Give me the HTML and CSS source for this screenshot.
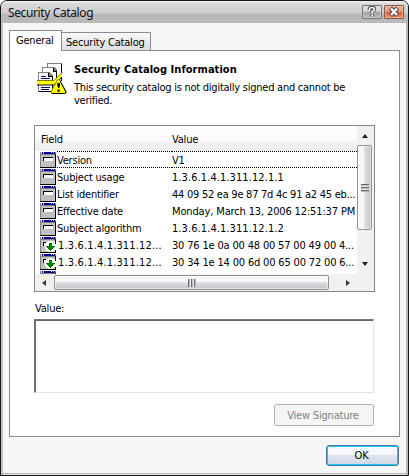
FILE: index.html
```html
<!DOCTYPE html>
<html lang="en">
<head>
<meta charset="utf-8">
<title>Security Catalog</title>
<link rel="stylesheet" href="styles.css">
</head>
<body>
<svg class="defs" width="0" height="0" aria-hidden="true">
  <symbol id="field" viewBox="0 0 16 16">
    <path fill="#808080" d="M0 0h16v16H0z"/><path fill="#c0c0c0" d="M1 3h14v12H1z"/>
    <path fill="#000080" d="M1 0h14v2H1z"/><path fill="#ff0" d="M1 0h1v2H1z"/><path fill="#0ff" d="M3 0h1v2H3z"/>
    <path fill="#c0c0c0" d="M11 0h1v1h-1zM13 0h1v1h-1z"/>
    <path fill="#000" d="M0 15h16v1H0zM15 2h1v14h-1zM3 5h10v1H3zM3 5h1v4H3z"/><path fill="#fff" d="M4 6h9v3H4z"/>
  </symbol>
  <symbol id="extension" viewBox="0 0 16 16">
    <use href="#field"/>
    <path fill="#fff" d="M8 4h5v1h2v2h1v6h-1v1h-2v1H8v-1H6v-2H5V7h1V5h2z"/>
    <path fill="#008000" d="M9 6h3v3h3v1h-1v1h-1v1h-1v1h-1v1h-1v-1H9v-1H8v-1H7v-1H6V9h3z"/>
  </symbol>
</svg>
<main class="window">
  <header class="titlebar">
    <h1>Security Catalog</h1>
    <button class="cap" aria-label="Help"><svg width="18" height="12" viewBox="0 0 18 12"><path d="M6.500 4V2.800Q6.800 1.500 9 1.500T11.500 3.200Q11.500 4.400 9.200 5.500V7M9.200 8.500v2" fill="none" stroke="#46464c" stroke-width="3.600"/><path d="M6.500 4V2.800Q6.800 1.500 9 1.500T11.500 3.200Q11.500 4.400 9.200 5.500V7M9.200 8.500v2" fill="none" stroke="#fff" stroke-width="1.700"/></svg></button>
    <button class="cap close" aria-label="Close"><svg width="18" height="12" viewBox="0 0 18 12"><path d="M5.500 2l7 7.500M12.500 2l-7 7.500" fill="none" stroke="#51434a" stroke-width="4.400"/><path d="M6 2.500l6 6.500M12 2.500l-6 6.500" fill="none" stroke="#fff" stroke-width="2.400"/></svg></button>
  </header>
  <nav class="tabs"><span class="tab active">General</span><span class="tab">Security Catalog</span></nav>
  <section class="page">
    <div class="intro">
      <svg width="30" height="33" viewBox="0 0 30 33">
        <g shape-rendering="crispEdges">
          <path fill="#808080" d="M10 0h15v16H10z"/><path fill="#fff" d="M11 1h13v15H11z"/><path d="M24 1h1v17h-1z"/>
          <path fill="#808080" d="M5 4h12l3 3v15H5z"/><path fill="#fff" d="M6 5h10v4h3v13H6z"/><path d="M19 8h1v14h-1zM16 5h1v3h3v1h-4z"/>
          <path fill="#808080" d="M1 9h11l4 4v16H1z"/><path fill="#fff" d="M2 10h9v4h4v14H2z"/><path d="M15 13h1v15h-1zM11 10h1v3h4v1h-5zM2 28h14v1H2z"/>
          <path fill="#000080" d="M4 13h5v1H4zM4 15h9v1H4zM4 24h9v1H4zM4 26h8v1H4z"/>
        </g>
        <path d="M0 17.500h17l8-8v4l-8 8H0z" fill="#ff0"/><path d="M0 17.500h17l8-8" fill="none" stroke="#808000"/><path d="M0 22h17l8-8" fill="none" stroke="#000"/>
        <path d="M21.500 16.500q1 0 1.500 1l6 11.500q0 1.500-1.500 1.500h-12q-1.500 0-1.500-1.500l6-11.500q.5-1 1.500-1z" fill="#ff0" stroke="#808000"/>
        <path d="M23 17.500l6 11.500q0 1.500-1.500 1.500H15" fill="none" stroke="#000"/>
        <path d="M20.300 20h2.700v2.500l-.8 2.500h-1l-.9-2.500zM20.500 26.500h2.200v2.200h-2.200z"/>
      </svg>
      <div class="summary"><h2>Security Catalog Information</h2><p><span>This security catalog is not digitally signed and cannot be</span><br>verified.</p></div>
    </div>
    <div class="list">
      <div class="table">
        <div class="row head"><span>Field</span><span>Value</span></div>
        <div class="row focus"><svg><use href="#field"/></svg><span>Version</span><span>V1</span></div>
        <div class="row"><svg><use href="#field"/></svg><span>Subject usage</span><span class="oid">1.3.6.1.4.1.311.12.1.1</span></div>
        <div class="row"><svg><use href="#field"/></svg><span>List identifier</span><span class="hex">44 09 52 ea 9e 87 7d 4c 91 a2 45 eb...</span></div>
        <div class="row"><svg><use href="#field"/></svg><span>Effective date</span><span class="date">Monday, March 13, 2006 12:51:37 PM</span></div>
        <div class="row"><svg><use href="#field"/></svg><span>Subject algorithm</span><span class="oid">1.3.6.1.4.1.311.12.1.2</span></div>
        <div class="row"><svg><use href="#extension"/></svg><span class="oid name">1.3.6.1.4.1.311.12...</span><span class="hex wide">30 76 1e 0a 00 48 00 57 00 49 00 4...</span></div>
        <div class="row"><svg><use href="#extension"/></svg><span class="oid name">1.3.6.1.4.1.311.12...</span><span class="hex wide">30 34 1e 14 00 6d 00 65 00 72 00 6...</span></div>
        <div class="row"><svg><use href="#extension"/></svg></div>
      </div>
      <div class="vscroll"><i class="arrow up"></i><div class="thumb"><i class="grip"></i></div><i class="arrow down"></i></div>
      <div class="hscroll"><i class="arrow left"></i><div class="thumb"><i class="grip"></i></div><i class="arrow right"></i></div>
    </div>
    <label class="label" for="value">Value:</label>
    <div class="value" id="value"></div>
    <button class="view" disabled>View Signature</button>
  </section>
  <footer><button class="ok">OK</button></footer>
</main>
</body>
</html>
```
FILE: styles.css
```css
* { box-sizing: border-box; }
body { margin: 0; background: #fff; color: #000; font: 11px/13px Tahoma, "DejaVu Sans Condensed", "Noto Sans", sans-serif; letter-spacing: -0.2px; overflow: hidden; }
.defs { position: absolute; }
h1, h2, p { margin: 0; }
button { font: inherit; letter-spacing: inherit; padding: 0; }
.window { width: 409px; height: 476px; border: 1px solid #171717; border-radius: 7px 7px 0 0; background: #f6f6f6; box-shadow: inset 2px 0 #c6bfc2, inset -2px 0 #bbb, inset 0 -1px #e4e6e4, inset 0 -2px #b5b8b5; display: flex; flex-direction: column; overflow: hidden; }
.titlebar { height: 22px; flex: none; padding: 4px 4px 0 7px; display: flex; gap: 2px; background: linear-gradient(#f7f0f3 0, #d9d6d8 3px, #cecece 12px, #bab8b9 13px, #bab8b9); }
h1 { flex: 1; font: 12px/17px "Noto Sans", sans-serif; letter-spacing: -0.38px; margin-top: -1px; color: #111; }
.cap { width: 20px; height: 14px; border: 1px solid #77747a; border-radius: 1px; background: linear-gradient(#ddd 0 5px, #a4a3a5 6px, #bbb); box-shadow: inset 0 0 0 1px #dadada88; display: flex; }
.cap.close { border-color: #785d5b; background: linear-gradient(#e9a78d 0 5px, #da6034 6px, #f58e54); box-shadow: inset 0 0 0 1px #ffc4a988; }
.tabs { height: 27px; flex: none; padding-left: 8px; display: flex; align-items: flex-end; }
.tab { height: 18px; width: 89px; border: 1px solid #8b8c93; border-width: 1px 1px 0 0; background: linear-gradient(#fafafa, #dedddf); padding: 3px 0 0 4px; white-space: nowrap; }
.tab.active { width: 53px; height: 21px; margin-bottom: -1px; border-left-width: 1px; background: #fff; padding: 3px 0 0 6px; z-index: 1; }
.page { width: 391px; height: 387px; flex: none; margin-left: 8px; border: 1px solid #8b8c93; background: #fff; padding: 12px 24px 0; display: flex; flex-direction: column; }
.intro { display: flex; height: 62px; padding-left: 3px; }
.intro svg { margin-right: 7px; flex: none; }
h2 { font: bold 11px/13px "DejaVu Sans Condensed", sans-serif; letter-spacing: 0.05px; white-space: nowrap; }
p { white-space: nowrap; margin-top: 5px; letter-spacing: -0.25px; }
.list { width: 341px; height: 167px; border: 1px solid #858591; display: grid; grid-template: 148px 17px / 322px 17px; flex: none; }
.table { overflow: hidden; }
.row { height: 17px; display: flex; align-items: flex-end; line-height: 14px; padding-left: 5px; white-space: nowrap; }
.row svg { width: 16px; height: 16px; margin-right: 1px; shape-rendering: crispEdges; }
.row span:first-of-type { width: 115px; }
.row.head { height: 25px; align-items: center; padding: 2px 0 0 6px; background: linear-gradient(#fff, #fdfafd 60%, #f4f3f4 64%, #f0eff0); }
.row.head span:first-child { width: 131px; }
.row.focus span:first-of-type, .row.focus span:last-child { height: 17px; padding-top: 2px; border: dotted #000; border-width: 1px 0; }
.row.focus span:last-child { flex: 1; }
.oid { letter-spacing: 0.08px; }
.oid.name { padding-left: 1px; letter-spacing: 0.15px; }
.hex { letter-spacing: -0.26px; }
.hex.wide { letter-spacing: -0.17px; }
.date { letter-spacing: -0.14px; }
.vscroll, .hscroll { background: #f2f1f2; display: flex; align-items: center; }
.vscroll { flex-direction: column; padding: 8px 2px 0 0; margin-left: 0; }
.hscroll { grid-column: 1 / 3; padding-left: 7px; }
.thumb { border: 1px solid #929297; border-radius: 2px; display: flex; justify-content: center; align-items: center; box-shadow: inset 0 0 0 1px #fff8; flex: none; }
.vscroll .thumb { width: 15px; height: 85px; margin: 7px 0 32px; background: linear-gradient(90deg, #f7f7f7 45%, #dfdfe3 50%, #c3c3ca); }
.hscroll .thumb { width: 275px; height: 15px; margin: 0 17px 0 8px; background: linear-gradient(#f7f7f7 45%, #dfdfe3 50%, #c3c3ca); }
.vscroll .grip { width: 8px; height: 8px; background: repeating-linear-gradient(#67676c 0 1px, #bbb 1px 2px, #eee 2px 3px); }
.hscroll .grip { width: 8px; height: 8px; background: repeating-linear-gradient(90deg, #67676c 0 1px, #bbb 1px 2px, #eee 2px 3px); }
.arrow { width: 0; height: 0; border: 3px solid transparent; flex: none; }
.up { border-top: 0; border-bottom: 4px solid #222; }
.down { border-bottom: 0; border-top: 4px solid #222; }
.left { border-left: 0; border-right: 4px solid #333; }
.right { border-right: 0; border-left: 4px solid #333; }
.label { margin: 10px 0 4px 1px; }
.value { width: 340px; height: 74px; flex: none; border: 1px solid #777; border-right-color: #e3e3e3; border-bottom-color: #e3e3e3; box-shadow: inset 1px 1px #696969; }
.view { width: 100px; height: 22px; margin: 11px 1px 0 auto; padding-right: 2px; border: 1px solid #b2b3b6; border-radius: 2px; background: #f5f5f5; color: #838383; }
footer { padding: 8px 9px 0; display: flex; justify-content: flex-end; }
.ok { width: 73px; height: 21px; padding-right: 2px; border: 1px solid #44779b; border-radius: 3px; background: linear-gradient(#f5f7fc 45%, #dfe4ef 50%, #d0d7e5); box-shadow: inset 0 0 0 1px #19c9f5; }
```
